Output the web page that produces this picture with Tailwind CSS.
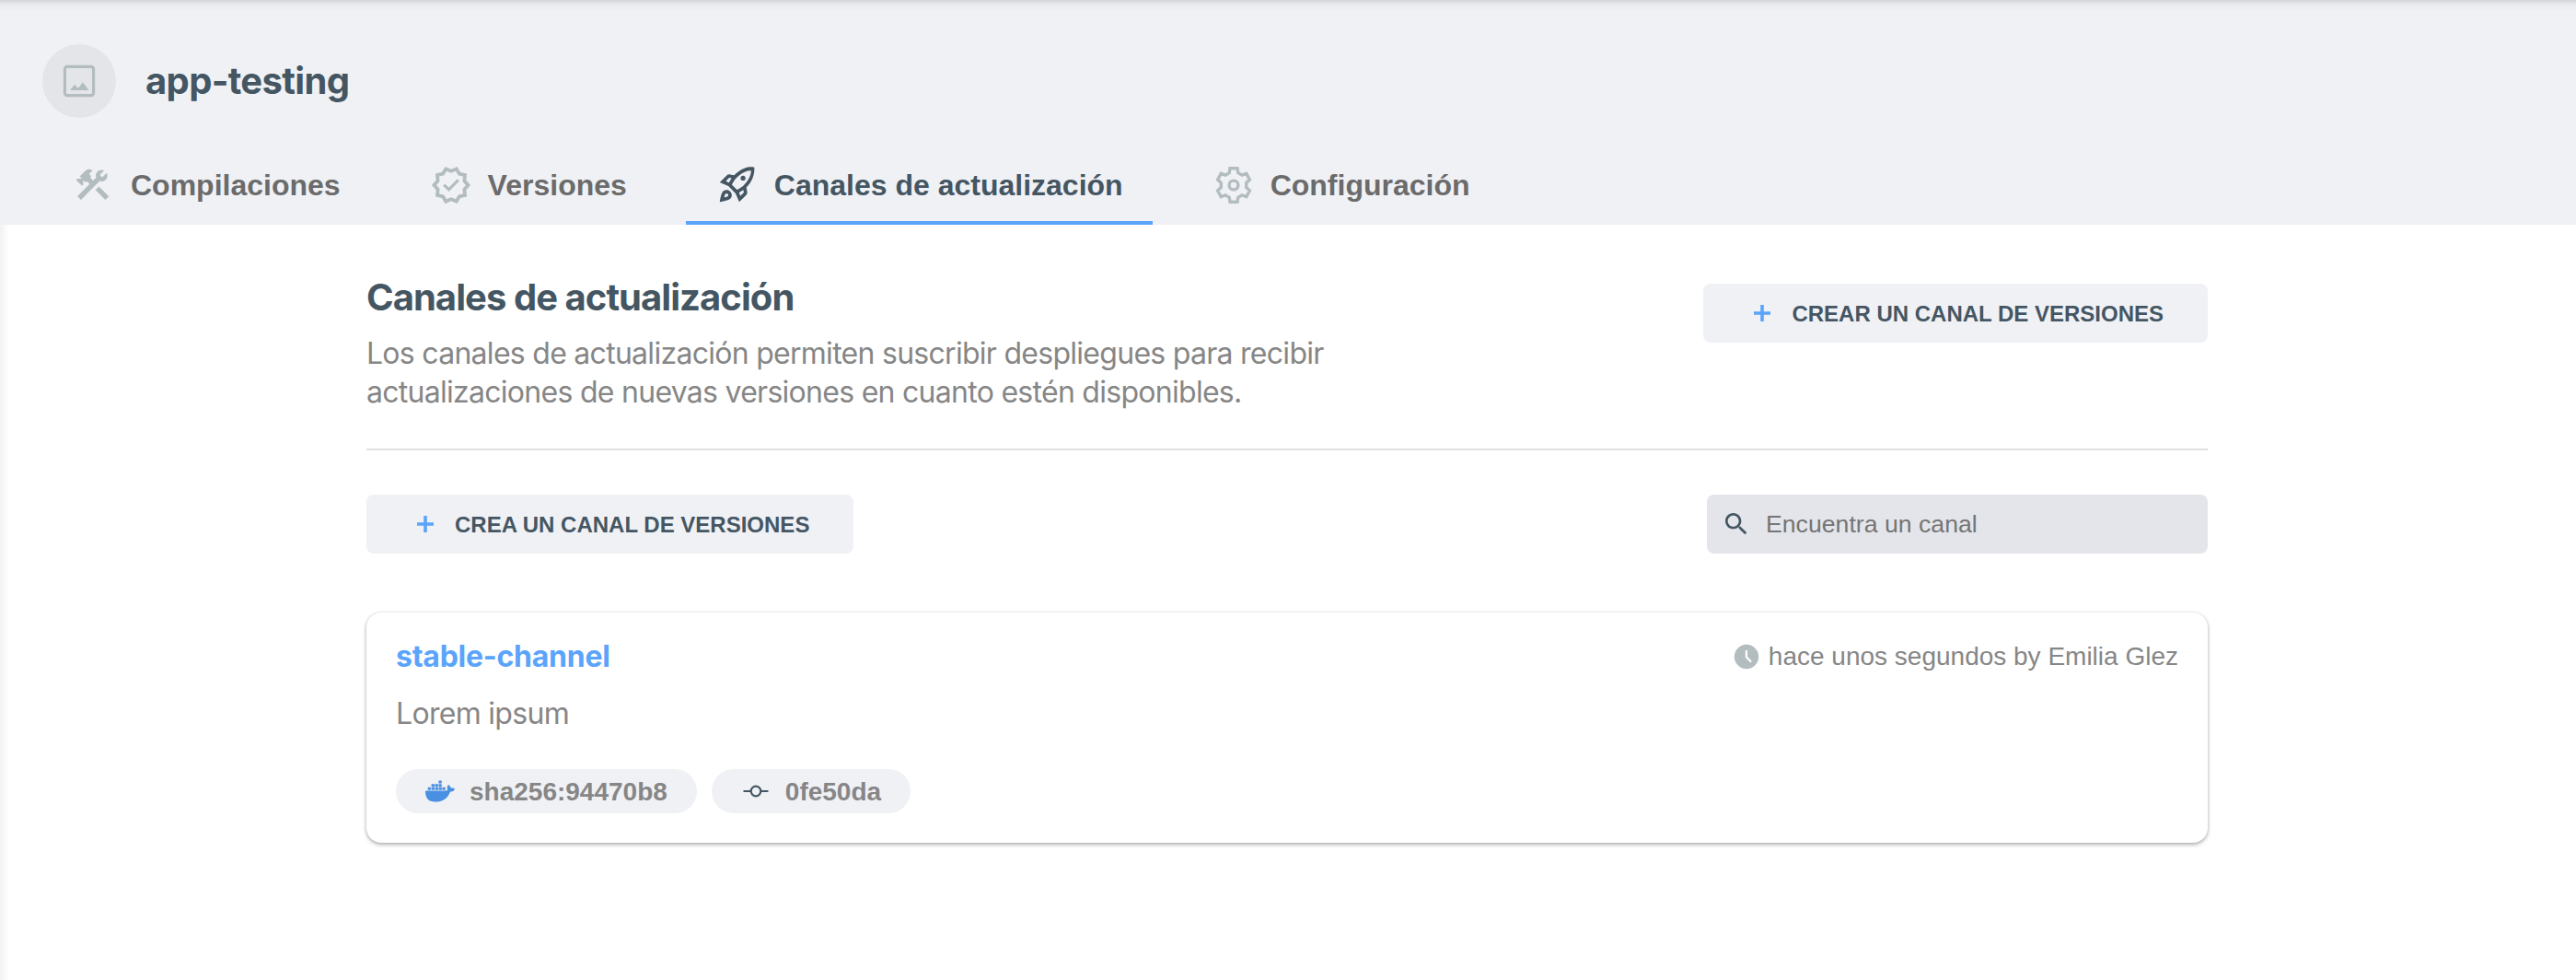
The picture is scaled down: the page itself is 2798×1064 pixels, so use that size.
<!DOCTYPE html>
<html lang="es">
<head>
<meta charset="utf-8">
<title>app-testing</title>
<script src="https://cdn.jsdelivr.net/npm/@tailwindcss/browser@4"></script>
</head>
<body class="w-[2798px] h-[1064px] overflow-hidden bg-white font-['Liberation_Sans',Arial,sans-serif]">
<header class="relative h-[244px] bg-[#f0f1f5] flex flex-col justify-between pt-12 pl-[46px]">
  <div class="absolute inset-x-0 top-0 h-3 bg-linear-to-b from-black/12 via-black/3 via-40% to-transparent"></div>
  <div class="flex items-center gap-8">
    <div class="size-20 rounded-full bg-[#e4e5e9] flex items-center justify-center">
      <svg class="size-9" viewBox="0 0 36 36" fill="none"><rect x="2.4" y="2.4" width="31.2" height="31.2" rx="2.6" stroke="#b3bdc0" stroke-width="3.2"/><path d="M8 28l5.200-6.300 3.700 4.300 5-6.800L28.500 28z" fill="#b3bdc0"/></svg>
    </div>
    <h1 class="text-[40px] leading-12 font-bold tracking-[-0.65px] text-[#455663] font-[Inter,sans-serif]">app-testing</h1>
  </div>
  <nav class="flex gap-8 h-[84px] text-[32px] leading-12 font-bold text-[#6b6b6b]">
    <a class="flex items-center gap-4 px-8 pb-[3px]">
      <span class="size-12 pr-[3px] flex items-center justify-center text-[#b3bdc0]"><svg class="size-[43px]" viewBox="0 0 24 24" fill="currentColor"><path d="m13.780 15.170 2.120-2.120 6 6-2.120 2.120z"/><path d="M17.500 10c1.930 0 3.500-1.570 3.500-3.500 0-.58-.16-1.120-.41-1.600l-2.700 2.700-1.490-1.490 2.700-2.700c-.48-.25-1.020-.41-1.600-.41C15.570 3 14 4.570 14 6.500c0 .41.08.8.21 1.160l-1.850 1.850-1.780-1.780.71-.71-1.410-1.410L12 3.490c-1.170-1.170-3.070-1.170-4.240 0L4.220 7.030l1.410 1.410H2.810l-.71.71 3.540 3.540.71-.71V9.150l1.410 1.410.71-.71 1.780 1.780-7.410 7.410 2.120 2.120L16.340 9.790c.36.13.75.21 1.160.21z"/></svg></span>
      <span>Compilaciones</span>
    </a>
    <a class="flex items-center gap-4 px-8 pb-[3px]">
      <span class="size-12 flex items-center justify-center text-[#b3bdc0]"><svg class="size-[46px]" viewBox="0 0 24 24" fill="currentColor"><path d="M23 11.990l-2.440-2.790.34-3.690-3.610-.82L15.400 1.500 12 2.960 8.600 1.500 6.710 4.690 3.100 5.500l.34 3.700L1 11.990l2.440 2.790-.34 3.700 3.610.82 1.890 3.200 3.400-1.470 3.400 1.460 1.890-3.190 3.610-.82-.34-3.690 2.440-2.800zm-3.950 1.480l-.56.65.08.85.18 1.950-1.900.43-.84.19-.44.74-.99 1.680-1.780-.77-.8-.34-.79.34-1.780.77-.99-1.670-.44-.74-.84-.19-1.900-.43.18-1.960.08-.85-.56-.65L3.670 12l1.290-1.480.56-.65-.09-.86-.18-1.940 1.900-.43.84-.19.44-.74.99-1.680 1.780.77.8.34.79-.34 1.780-.77.99 1.680.44.74.84.19 1.900.43-.18 1.950-.08.85.56.65 1.290 1.470-1.280 1.480z"/><path d="M7.900 11.800l2.800 2.700 5.400-5.400" fill="none" stroke="currentColor" stroke-width="1.700"/></svg></span>
      <span>Versiones</span>
    </a>
    <a class="relative flex items-center gap-4 px-8 pb-[3px] text-[#455663]">
      <span class="size-12 flex items-center justify-center"><svg class="size-[45px]" viewBox="0 0 24 24" fill="currentColor"><path d="M6 15c-.83 0-1.580.34-2.120.88C2.700 17.060 2 22 2 22s4.940-.7 6.120-1.880C8.660 19.580 9 18.830 9 18c0-1.660-1.340-3-3-3zm.71 3.710c-.28.28-2.170.76-2.170.76s.47-1.880.76-2.170c.17-.19.42-.3.7-.3.55 0 1 .45 1 1 0 .28-.11.53-.29.71zm10.710-5.060C23 8.070 22 2 22 2s-5.290-1.780-11.650 4.580l-2.490-.5c-.65-.13-1.330.08-1.810.55L2 10.690l5 2.140L11.170 17l2.140 5 4.050-4.050c.47-.47.68-1.150.55-1.810l-.49-2.490zM7.410 10.830l-1.910-.82 1.970-1.970 1.440.29c-.57.83-1.080 1.700-1.500 2.500zm6.580 7.670l-.82-1.910c.8-.42 1.670-.93 2.490-1.500l.29 1.440-1.960 1.970zM16 12.240c-1.320 1.320-3.380 2.400-4.040 2.730l-2.930-2.930c.32-.65 1.400-2.710 2.730-4.040 4.680-4.680 8.370-4.130 8.370-4.130s.55 3.690-4.130 8.370z"/><circle cx="15.500" cy="8.200" r="1.400"/></svg></span>
      <span>Canales de actualización</span>
      <span class="absolute inset-x-0 bottom-0 h-1 bg-[#5ba4fb]"></span>
    </a>
    <a class="flex items-center gap-4 px-8 pb-[3px]">
      <span class="size-12 flex items-center justify-center text-[#b3bdc0]"><svg class="size-12" viewBox="-24 -24 48 48" fill="none" stroke="currentColor" stroke-width="3.400"><path d="M-4-18.300H4L4.800-13.300 9.100-10.800 13.800-12.600 17.400-5.900 13.700-2.500V2.500L17.400 5.900 13.800 12.600 9.100 10.800 4.800 13.300 4 18.300H-4L-4.800 13.300-9.100 10.800-13.800 12.600-17.400 5.900-13.700 2.500V-2.500L-17.400-5.900-13.800-12.600-9.100-10.800-4.800-13.300z"/><circle r="4.900"/></svg></span>
      <span>Configuración</span>
    </a>
  </nav>
</header>

<main class="relative h-[820px] pl-[398px] pr-[400px]">
  <div class="absolute left-0 inset-y-0 w-[10px] bg-linear-to-r from-black/5 to-transparent"></div>
  <section class="flex justify-between items-start h-[245px] pt-[54px] border-b-2 border-[#dfe0e1]">
    <div class="pt-px font-[Inter,sans-serif]">
      <h2 class="text-[40px] leading-12 font-bold tracking-[-0.95px] text-[#455663]">Canales de actualización</h2>
      <p class="mt-4 w-[1100px] text-[32px] leading-[42px] tracking-[-0.72px] text-[#868686]">Los canales de actualización permiten suscribir despliegues para recibir<br>actualizaciones de nuevas versiones en cuanto estén disponibles.</p>
    </div>
    <button class="mt-[10px] h-16 px-12 flex items-center gap-4 rounded-lg bg-[#f0f1f5] text-2xl font-bold text-[#455663]">
      <svg class="size-8" viewBox="0 0 32 32" stroke="#5ba4fb" stroke-width="3.600"><path d="M16 7v18M7 16h18"/></svg>
      <span class="pt-px">CREAR UN CANAL DE VERSIONES</span>
    </button>
  </section>

  <div class="flex justify-between pt-12">
    <button class="h-16 px-12 flex items-center gap-4 rounded-lg bg-[#f0f1f5] text-2xl font-bold text-[#455663]">
      <svg class="size-8" viewBox="0 0 32 32" stroke="#5ba4fb" stroke-width="3.600"><path d="M16 7v18M7 16h18"/></svg>
      <span class="pt-px">CREA UN CANAL DE VERSIONES</span>
    </button>
    <label class="w-[544px] h-16 px-4 flex items-center gap-4 rounded-lg bg-[#e4e5ea] text-[26.67px] text-[#757575]">
      <svg class="size-8" viewBox="0 0 24 24" fill="#455663"><path d="M15.500 14h-.79l-.28-.27C15.410 12.590 16 11.110 16 9.500 16 5.910 13.090 3 9.500 3S3 5.910 3 9.500 5.910 16 9.500 16c1.610 0 3.090-.59 4.230-1.570l.27.28v.79l5 4.990L20.490 19l-4.990-5zm-6 0C7.010 14 5 11.990 5 9.500S7.010 5 9.500 5 14 7.010 14 9.500 11.990 14 9.500 14z"/></svg>
      <span>Encuentra un canal</span>
    </label>
  </div>

  <article class="mt-16 h-[250px] px-8 pt-6 rounded-2xl bg-white shadow-[0_2px_4px_rgba(0,0,0,0.3),0_0_3px_rgba(0,0,0,0.1)]">
    <div class="flex justify-between items-center h-12">
      <h3 class="text-[32px] font-bold tracking-[-0.25px] text-[#5ba4fb] font-[Inter,sans-serif]">stable-channel</h3>
      <div class="flex items-center gap-2 text-[28px] text-[#868686]">
        <svg class="size-8" viewBox="0 0 32 32" fill="none"><circle cx="16" cy="16" r="13.200" fill="#b3bdc0"/><path d="M15.900 9v7.200l5.200 5.600" stroke="#fff" stroke-width="2.200"/></svg>
        <span>hace unos segundos by Emilia Glez</span>
      </div>
    </div>
    <p class="mt-[14px] text-[32px] leading-12 tracking-[-0.7px] text-[#868686] font-[Inter,sans-serif]">Lorem ipsum</p>
    <div class="mt-9 flex gap-4 text-[28px] font-bold text-[#868686]">
      <span class="h-12 px-8 flex items-center gap-4 rounded-full bg-[#f0f1f5]">
        <svg class="size-8" viewBox="0 0 24 24" fill="#4a90e2"><path d="M13.983 11.078h2.119a.186.186 0 00.186-.185V9.006a.186.186 0 00-.186-.186h-2.119a.185.185 0 00-.185.185v1.888c0 .102.083.185.185.185m-2.954-5.430h2.118a.186.186 0 00.186-.186V3.574a.186.186 0 00-.186-.185h-2.118a.185.185 0 00-.185.185v1.888c0 .102.082.185.185.185m0 2.716h2.118a.187.187 0 00.186-.186V6.290a.186.186 0 00-.186-.185h-2.118a.185.185 0 00-.185.185v1.887c0 .102.082.185.185.186m-2.930 0h2.120a.186.186 0 00.184-.186V6.290a.185.185 0 00-.185-.185H8.100a.185.185 0 00-.185.185v1.887c0 .102.083.185.185.186m3.010 2.715h2.118a.186.186 0 00.186-.185V9.006a.186.186 0 00-.186-.186h-2.118a.185.185 0 00-.185.185v1.888c0 .102.082.185.185.185m-2.930 0h2.120a.185.185 0 00.184-.185V9.006a.185.185 0 00-.184-.186h-2.120a.185.185 0 00-.184.185v1.888c0 .102.083.185.185.185m-2.964 0h2.119a.185.185 0 00.185-.185V9.006a.185.185 0 00-.184-.186h-2.120a.186.186 0 00-.186.186v1.887c0 .102.084.185.186.185m0-2.715h2.119a.186.186 0 00.185-.186V6.290a.185.185 0 00-.185-.185H5.136a.186.186 0 00-.186.185v1.887c0 .102.084.185.186.186m-2.920 2.715h2.120a.185.185 0 00.184-.185V9.006a.185.185 0 00-.184-.186h-2.120a.185.185 0 00-.184.185v1.888c0 .102.082.185.185.185M23.763 9.890c-.065-.051-.672-.51-1.954-.51-.338.001-.676.03-1.010.087-.248-1.700-1.653-2.530-1.716-2.566l-.344-.199-.226.327c-.284.438-.49.922-.612 1.430-.23.97-.09 1.882.403 2.661-.595.332-1.550.413-1.744.42H.751a.751.751 0 00-.75.748 11.376 11.376 0 00.692 4.062c.545 1.428 1.355 2.480 2.410 3.124 1.180.723 3.100 1.137 5.275 1.137.983.003 1.963-.086 2.930-.266a12.248 12.248 0 003.823-1.389c.98-.567 1.860-1.288 2.610-2.136 1.252-1.418 1.998-2.997 2.553-4.400h.221c1.372 0 2.215-.549 2.680-1.009.309-.293.55-.65.707-1.046l.098-.288Z"/></svg>
        <span class="pt-px">sha256:94470b8</span>
      </span>
      <span class="h-12 px-8 flex items-center gap-4 rounded-full bg-[#f0f1f5]">
        <svg class="size-8" viewBox="0 0 32 32" fill="none" stroke="#455663" stroke-width="2.200"><circle cx="16" cy="16" r="5.300"/><path d="M2.500 16h8.200M21.300 16h8.200"/></svg>
        <span class="pt-px">0fe50da</span>
      </span>
    </div>
  </article>
</main>
</body>
</html>
